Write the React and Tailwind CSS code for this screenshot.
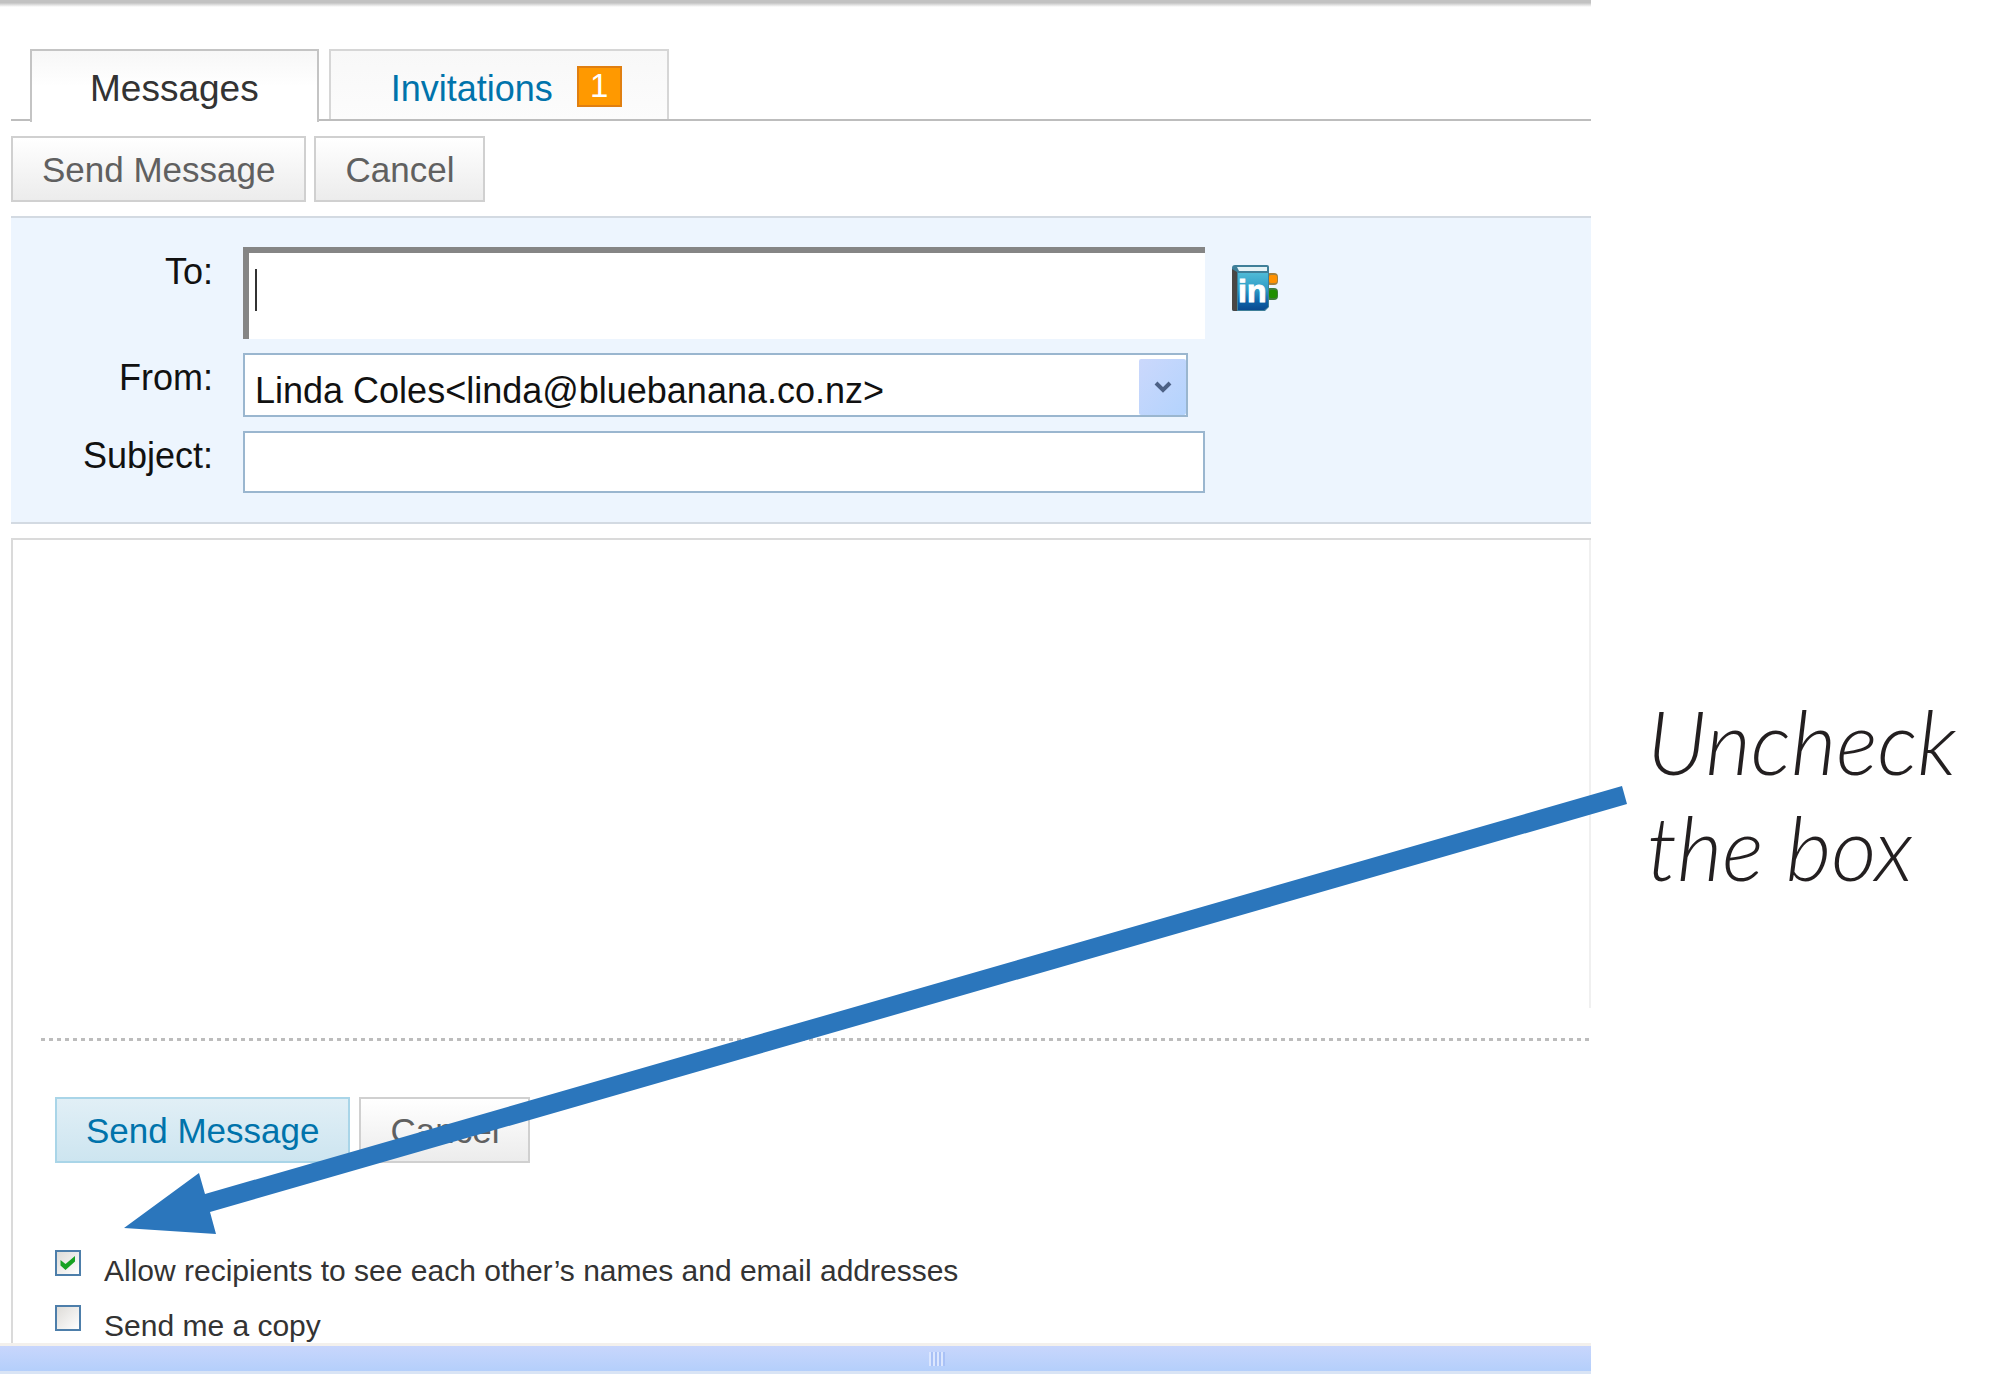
import { useState } from "react";

function Button({ primary, children }) {
  const look = primary
    ? "border-[#a9d5e8] bg-linear-to-b from-[#e1eff6] to-[#cde5f0] text-[#0073ab]"
    : "border-[#d0d0d0] bg-linear-to-b from-white to-[#ececec] text-[#606060]";
  return (
    <button
      type="button"
      className={`h-[66px] border-2 px-[29px] pt-[2px] text-[35px] leading-10 whitespace-nowrap ${look}`}
    >
      {children}
    </button>
  );
}

function AddressBookIcon() {
  return (
    <svg viewBox="0 0 48 48" className="size-12" aria-hidden="true">
      <defs>
        <linearGradient id="cover" x1="0" y1="0" x2="0" y2="1">
          <stop offset="0" stopColor="#4fbad6" />
          <stop offset="0.45" stopColor="#2e9cc6" />
          <stop offset="0.8" stopColor="#0d5fa5" />
          <stop offset="1" stopColor="#0a4a90" />
        </linearGradient>
      </defs>
      <rect x="35" y="9" width="12" height="12" rx="4" fill="#a5803c" />
      <rect x="38" y="11" width="8" height="8" rx="2" fill="#ff9100" />
      <rect x="35" y="24" width="12" height="12" rx="4" fill="#3f7d3a" />
      <rect x="38" y="26" width="8" height="8" rx="2" fill="#1f8f00" />
      <path d="M4 1H36Q38 1 38 3V43L34 47H3Q1 47 1 45V4Q1 1 4 1Z" fill="#3f7f99" />
      <path d="M1 5L6 8V47H3Q1 47 1 45Z" fill="#4a4644" />
      <path d="M6 3H36V7H8Z" fill="#e4f2f6" />
      <path d="M7 9H37V43L33 46H7Z" fill="url(#cover)" />
      <text
        x="7"
        y="38"
        fontFamily="Liberation Sans, sans-serif"
        fontWeight="700"
        fontSize="32"
        fill="#ffffff"
        stroke="#ffffff"
        strokeWidth="1"
      >
        in
      </text>
    </svg>
  );
}

function Option({ label, checked, onChange }) {
  return (
    <label className="flex items-start gap-[23px] text-[30px] leading-[34px] text-[#333333]">
      <span className="relative size-[26px] shrink-0">
        <input
          type="checkbox"
          checked={checked}
          onChange={onChange}
          className="block size-[26px] appearance-none border-2 border-[#4d7eaa] bg-linear-to-br from-[#dedcd8] to-white"
        />
        {checked && (
          <svg viewBox="0 0 26 26" className="pointer-events-none absolute inset-0 size-[26px]" aria-hidden="true">
            <path d="M5.500 10L10.500 14L20 6V11.500L10.500 20L5.500 15.500Z" fill="#17a222" />
          </svg>
        )}
      </span>
      <span className="pt-1">{label}</span>
    </label>
  );
}

function Annotation() {
  return (
    <svg
      viewBox="0 0 1997 1374"
      preserveAspectRatio="none"
      className="pointer-events-none absolute inset-0 h-full w-full"
      aria-hidden="true"
    >
      <path
        d="M124 1228L199 1173L205 1194L1622 786L1627 804L210 1212L216 1234Z"
        fill="#2b76bc"
      />
    </svg>
  );
}

export default function App() {
  const [visible, setVisible] = useState(true);
  const [copy, setCopy] = useState(false);

  return (
    <div className="relative flex bg-white font-['Liberation_Sans',Arial,sans-serif]">
      <main className="min-w-0 flex-1">
        <header className="h-[49px]">
          <div className="h-[7px] bg-linear-to-b from-[#c2c2c2] from-40% to-white" />
        </header>

        <div className="pl-[11px]">
          <nav className="flex h-[72px] gap-[10px] border-b-2 border-[#bdbdbd] pl-[19px] text-[37px] leading-10">
            <a
              href="#messages"
              className="-mb-[3px] border-2 border-b-0 border-[#c4c4c4] bg-linear-to-b from-[#f7f7f7] to-white to-50% px-[58px] pt-[18px] text-[#333333]"
            >
              Messages
            </a>
            <a
              href="#invitations"
              className="flex gap-6 border-2 border-b-0 border-[#d6d6d6] bg-linear-to-b from-[#f8f8f8] to-[#fcfcfc] pt-[15px] pr-[45px] pl-[60px] text-[36px] text-[#0073ab]"
            >
              <span className="pt-[3px]">Invitations</span>
              <span className="h-[41px] w-[45px] border-2 border-[#e07f10] bg-[#ff9900] text-center text-[33px] leading-9 text-white">
                1
              </span>
            </a>
          </nav>

          <div className="flex gap-2 pt-[15px] pb-[14px]">
            <Button>Send Message</Button>
            <Button>Cancel</Button>
          </div>

          <form className="grid grid-cols-[202px_minmax(0,1fr)] gap-x-[30px] gap-y-[14px] border-y-2 border-[#d3dae2] bg-[#edf5fe] py-[29px] text-[36px] leading-10 text-[#111111]">
            <label htmlFor="to" className="pt-[5px] text-right">
              To:
            </label>
            <div className="flex items-start gap-[26px]">
              <div className="relative w-full max-w-[962px]">
                <textarea
                  id="to"
                  className="block h-[92px] w-full resize-none border-t-6 border-l-6 border-[#858585] bg-white px-2 pt-4 outline-none"
                />
                <span className="absolute top-[22px] left-3 h-[42px] w-[2px] bg-[#333333]" />
              </div>
              <button type="button" aria-label="Choose from address book" className="mt-[17px] shrink-0">
                <AddressBookIcon />
              </button>
            </div>

            <label htmlFor="from" className="pt-[5px] text-right">
              From:
            </label>
            <div className="relative w-full max-w-[945px]">
              <select
                id="from"
                className="block h-16 w-full appearance-none border-2 border-[#9ab6cf] bg-white pt-3 pl-[10px] leading-10"
              >
                <option>{"Linda Coles<linda@bluebanana.co.nz>"}</option>
              </select>
              <span className="pointer-events-none absolute right-[2px] bottom-[2px] flex h-14 w-[47px] items-center justify-center rounded-xs bg-linear-to-br from-[#cbd8fc] to-[#b3d3fd]">
                <svg viewBox="0 0 18 12" className="h-3 w-[18px]" aria-hidden="true">
                  <path d="M2 2L9 9L16 2" fill="none" stroke="#4d6185" strokeWidth="4" />
                </svg>
              </span>
            </div>

            <label htmlFor="subject" className="pt-[5px] text-right">
              Subject:
            </label>
            <input
              id="subject"
              type="text"
              className="h-[62px] w-full max-w-[962px] border-2 border-[#9ab6cf] bg-white px-2 outline-none"
            />
          </form>

          <section className="mt-[14px] border-t-2 border-l-2 border-[#dadada]">
            <textarea
              aria-label="Message"
              className="block h-[468px] w-full resize-none border-r-2 border-[#f0f0f0] bg-white p-6 text-[30px] outline-none"
            />
            <div className="mt-[30px] ml-7 h-[3px] bg-[repeating-linear-gradient(to_right,#bcbcbc_0,#bcbcbc_4px,transparent_4px,transparent_8px)]" />
            <div className="mt-14 ml-[42px] flex gap-[9px]">
              <Button primary>Send Message</Button>
              <Button>Cancel</Button>
            </div>
            <div className="mt-[87px] ml-[42px] flex flex-col gap-[17px]">
              <Option
                label="Allow recipients to see each other’s names and email addresses"
                checked={visible}
                onChange={() => setVisible(!visible)}
              />
              <Option label="Send me a copy" checked={copy} onChange={() => setCopy(!copy)} />
            </div>
          </section>
        </div>

        <footer className="flex h-[31px] justify-center border-t-3 border-b-3 border-t-[#f3f0ec] border-b-[#d9e4f5] bg-linear-to-b from-[#c8d6fc] to-[#b4cffb] pt-[6px] pl-[282px]">
          <span className="h-[14px] w-4 bg-[repeating-linear-gradient(to_right,#dbe6fe_0,#dbe6fe_2px,#a9c1f6_2px,#a9c1f6_4px)]" />
        </footer>
      </main>

      <aside className="w-[406px] shrink-0 pt-[688px] pl-[56px]">
        <p className="font-['Lato',sans-serif] text-[88px] leading-[106px] font-light text-[#231f20] italic">
          Uncheck
          <br />
          the box
        </p>
      </aside>

      <Annotation />
    </div>
  );
}
